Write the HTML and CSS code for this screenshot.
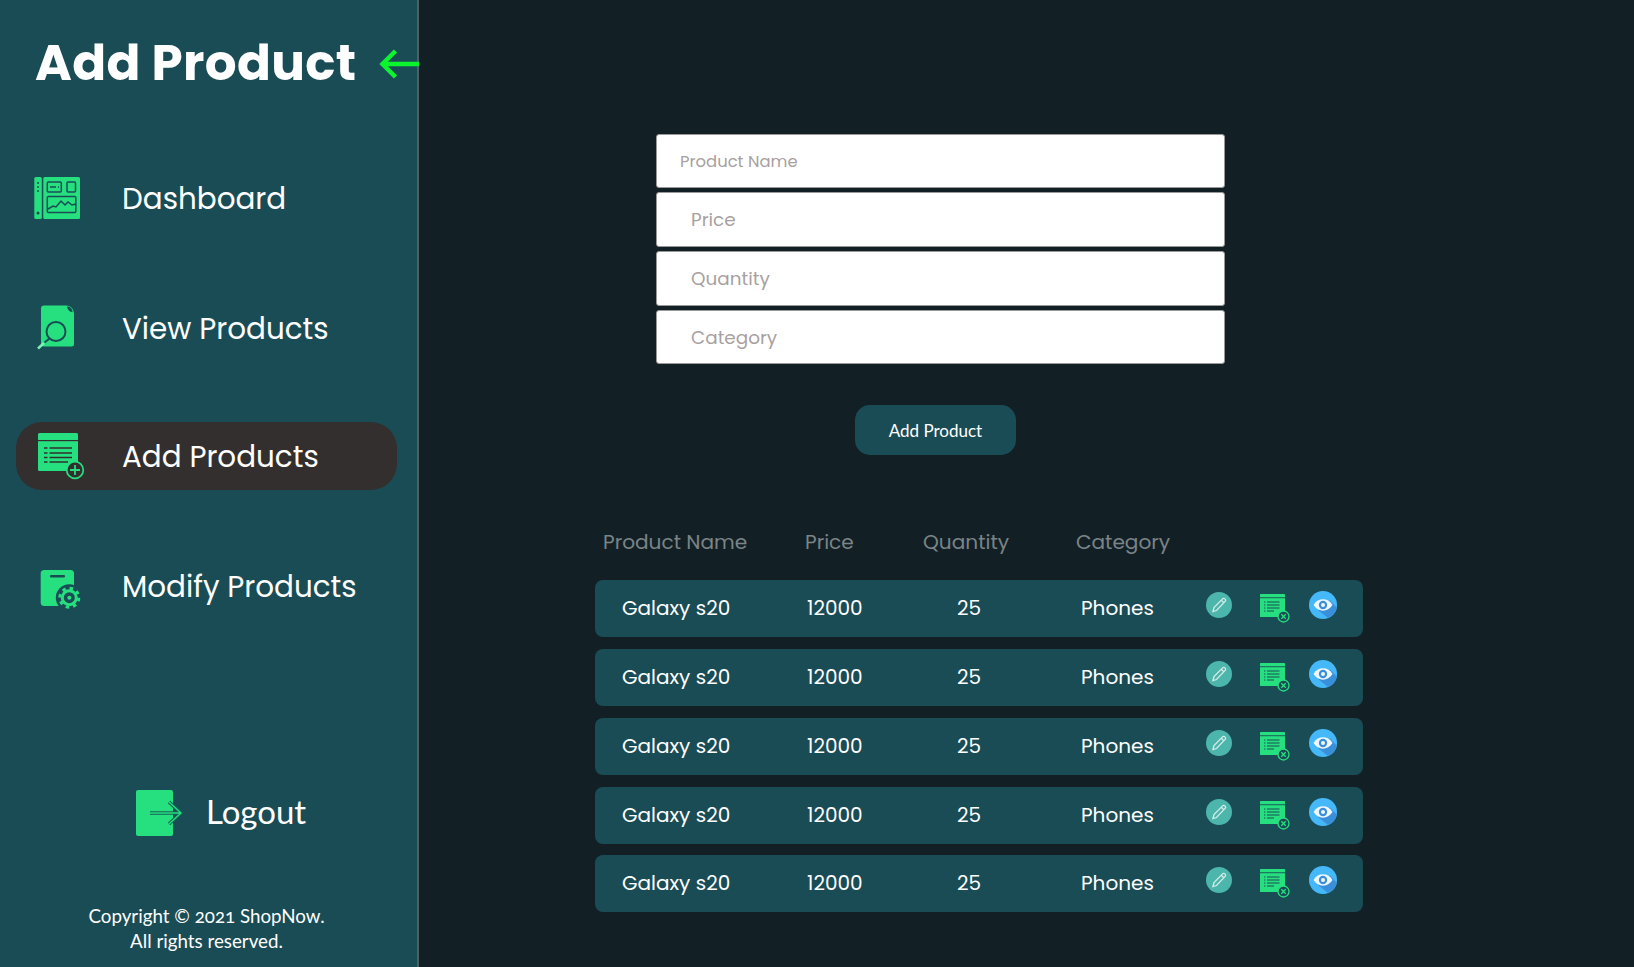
FILE: index.html
```html
<!DOCTYPE html>
<html lang="en">
<head>
  <meta charset="UTF-8">
  <meta name="viewport" content="width=device-width, initial-scale=1.0">
  <title>Add Product - ShopNow</title>
  <link rel="stylesheet" href="styles.css">
</head>
<body>

<!-- shared icons -->
<svg class="sprites" width="0" height="0">
  <symbol id="icon-sheet" viewBox="0 0 26 26">
    <rect x="0" y="1" width="25" height="23" rx="0.6" fill="#26e07f"/>
    <rect x="0" y="4.3" width="25" height="0.9" fill="#1a4c56"/>
    <path d="M4 9h1.400M7 9h12.500M4 12h1.400M7 12h12.500M4 15h1.400M7 15h12.500M4 18h1.400M7 18h7" stroke="#1a4c56" stroke-width="1"/>
  </symbol>
  <symbol id="icon-edit" viewBox="0 0 26 26">
    <circle cx="13" cy="13" r="13" fill="#4db6ac"/>
    <path d="M7 19.500l1-4 8.600-8.600a1.600 1.600 0 0 1 2.300 0l.2.2a1.600 1.600 0 0 1 0 2.300L10.500 18.500z" fill="none" stroke="#d5ece9" stroke-width="1.300"/>
    <path d="M15.300 8.200l2.500 2.500" stroke="#d5ece9" stroke-width="1.300"/>
  </symbol>
  <symbol id="icon-remove" viewBox="0 0 30 30">
    <use href="#icon-sheet" width="26" height="26"/>
    <circle cx="23.500" cy="23.500" r="5.500" fill="#1a4c56" stroke="#26e07f" stroke-width="1.300"/>
    <path d="M21.300 21.300l4.400 4.400M25.700 21.300l-4.400 4.400" stroke="#26e07f" stroke-width="1.300"/>
  </symbol>
  <symbol id="icon-view" viewBox="0 0 28 28">
    <circle cx="14" cy="14" r="14" fill="#45b8fa"/>
    <path d="M21 9.500L28 17A14 14 0 0 1 19 27L9 19z" fill="#3a8fd9"/>
    <path d="M4.500 14C7 10 10.500 8.300 14 8.300S21 10 23.500 14C21 18 17.500 19.700 14 19.700S7 18 4.500 14z" fill="#eef8fe"/>
    <circle cx="14" cy="14" r="4.200" fill="#3a8fd9"/>
    <circle cx="14" cy="14" r="2" fill="#eef8fe"/>
  </symbol>
</svg>

<div class="layout">
  <aside class="sidebar">
    <header class="brand">
      <h1>Add Product</h1>
      <svg class="back-arrow" width="40" height="30" viewBox="0 0 40 30">
        <path d="M16.500 2L3.500 15l13 13M3.500 15H40" fill="none" stroke="#0bf52f" stroke-width="4.500"/>
      </svg>
    </header>

    <nav class="menu">
      <a class="menu-item" href="#">
        <svg class="menu-icon" width="52" height="48" viewBox="0 0 52 48">
          <rect x="0.300" y="3" width="7.500" height="42" rx="1.500" fill="#26e07f"/>
          <rect x="9.300" y="3" width="36.700" height="42" rx="1.500" fill="#26e07f"/>
          <path d="M3 9h2M3 13h2M3 17h2" stroke="#1a4c56" stroke-width="1.500"/>
          <circle cx="4" cy="39" r="1.500" fill="#1a4c56"/>
          <g fill="none" stroke="#1a4c56" stroke-width="1.500">
            <rect x="13.300" y="8" width="14" height="10" rx="1"/>
            <rect x="33" y="8" width="8.500" height="10" rx="1"/>
            <rect x="13.300" y="22.500" width="28.500" height="16" rx="1"/>
            <path d="M14 35l5-3 3 1 5-6 4 4 3-3 4 3 4-1"/>
            <path d="M16 13h6M24 13h1"/>
          </g>
        </svg>
        <span>Dashboard</span>
      </a>
      <a class="menu-item" href="#">
        <svg class="menu-icon" width="52" height="48" viewBox="0 0 52 48">
          <path d="M10 1.500h22a8 8 0 0 1 8 8V40a2.500 2.500 0 0 1-2.500 2.500h-27.500A3 3 0 0 1 7 39.500V4.500a3 3 0 0 1 3-3z" fill="#26e07f"/>
          <path d="M33 2.500c3 0 5.500 2 5.500 5.500-3 0-5-2-5.500-5.500z" fill="#1a4c56"/>
          <circle cx="22" cy="27.500" r="9.500" fill="#26e07f" stroke="#1a4c56" stroke-width="2"/>
          <path d="M15.500 34.500l-5 4" stroke="#1a4c56" stroke-width="2"/>
          <path d="M10 39l-6 5.500" stroke="#7df0b4" stroke-width="2.500"/>
        </svg>
        <span>View Products</span>
      </a>
      <a class="menu-item active" href="#">
        <svg class="menu-icon" width="52" height="48" viewBox="0 0 52 48">
          <rect x="4" y="1" width="40" height="38" rx="1.500" fill="#26e07f"/>
          <rect x="4" y="8" width="40" height="1.200" fill="#332f2f"/>
          <path d="M10 16h3.500M15.500 16H38M10 21h3.500M15.500 21H38M10 25.500h3.500M15.500 25.500H38M10 30h3.500M15.500 30H34" stroke="#332f2f" stroke-width="1.700"/>
          <circle cx="41" cy="38" r="8.300" fill="#332f2f" stroke="#26e07f" stroke-width="1.700"/>
          <path d="M41 33v10M36 38h10" stroke="#26e07f" stroke-width="1.800"/>
        </svg>
        <span>Add Products</span>
      </a>
      <a class="menu-item" href="#">
        <svg class="menu-icon" width="52" height="48" viewBox="0 0 52 48">
          <rect x="6.700" y="8" width="33.300" height="36" rx="3.500" fill="#26e07f"/>
          <rect x="16" y="13" width="15" height="2.500" rx="1" fill="#1a4c56"/>
          <circle cx="35.300" cy="35.700" r="13.500" fill="#1a4c56"/>
          <circle cx="35.300" cy="35.700" r="7" fill="none" stroke="#26e07f" stroke-width="3"/>
          <circle cx="35.300" cy="35.700" r="9.500" fill="none" stroke="#26e07f" stroke-width="3" stroke-dasharray="3.500 3.960"/>
          <circle cx="35.300" cy="35.700" r="2" fill="#26e07f"/>
        </svg>
        <span>Modify Products</span>
      </a>
    </nav>

    <div class="logout">
      <svg width="47" height="46" viewBox="0 0 47 46">
        <rect x="0" y="0" width="37" height="46" rx="2" fill="#26e07f"/>
        <path d="M14 23H45M33 12l12 11-12 11" fill="none" stroke="#166355" stroke-width="3.500"/>
        <path d="M14 23H45M33 12l12 11-12 11" fill="none" stroke="#26e07f" stroke-width="1.300"/>
      </svg>
      <span>Logout</span>
    </div>

    <p class="copyright">Copyright © 2021 ShopNow.<br>All rights reserved.</p>
  </aside>

  <main class="content">
    <form class="product-form">
      <input class="field first" type="text" placeholder="Product Name">
      <input class="field" type="text" placeholder="Price">
      <input class="field" type="text" placeholder="Quantity">
      <input class="field" type="text" placeholder="Category">
      <button class="add-btn" type="button">Add Product</button>
    </form>

    <section class="products">
      <div class="table-head">
        <span class="col-name">Product Name</span>
        <span class="col-price">Price</span>
        <span class="col-qty">Quantity</span>
        <span class="col-cat">Category</span>
      </div>
      <div id="rows"></div>
    </section>
  </main>
</div>

<script>
  // Product rows
  const products = [
    { name: "Galaxy s20", price: 12000, qty: 25, category: "Phones" },
    { name: "Galaxy s20", price: 12000, qty: 25, category: "Phones" },
    { name: "Galaxy s20", price: 12000, qty: 25, category: "Phones" },
    { name: "Galaxy s20", price: 12000, qty: 25, category: "Phones" },
    { name: "Galaxy s20", price: 12000, qty: 25, category: "Phones" }
  ];

  const rows = document.getElementById('rows');
  products.forEach(p => {
    const row = document.createElement('div');
    row.className = 'row';
    row.innerHTML = `
      <span class="cell-name">${p.name}</span>
      <span class="cell-price">${p.price}</span>
      <span class="cell-qty">${p.qty}</span>
      <span class="cell-cat">${p.category}</span>
      <span class="actions">
        <svg class="act-edit" width="26" height="26"><use href="#icon-edit"/></svg>
        <svg class="act-remove" width="30" height="30"><use href="#icon-remove"/></svg>
        <svg class="act-view" width="28" height="28"><use href="#icon-view"/></svg>
      </span>`;
    rows.appendChild(row);
  });
</script>

</body>
</html>
```

FILE: styles.css
```css
* {
  box-sizing: border-box;
}

body {
  margin: 0;
  background: #122026;
  font-family: 'Poppins', 'Inter', 'Open Sans', sans-serif;
  color: white;
  overflow: hidden;
}

.sprites {
  position: absolute;
}

.layout {
  display: flex;
  height: 967px;
}

/* Sidebar */
.sidebar {
  width: 419px;
  flex-shrink: 0;
  background: #1a4c56;
  border-right: 2px solid #4f5f63;
  display: flex;
  flex-direction: column;
}

.brand {
  display: flex;
  align-items: center;
  height: 126px;
  padding-left: 35px;
  gap: 23px;
}

.brand h1 {
  margin: 0;
  font-size: 50px;
  font-weight: 700;
  letter-spacing: 0.3px;
  white-space: nowrap;
}

.back-arrow {
  flex-shrink: 0;
  margin-top: 1px;
}

.menu {
  display: flex;
  flex-direction: column;
  padding: 0 20px 0 16px;
  margin-top: 38px;
}

.menu-item {
  display: flex;
  align-items: center;
  height: 68px;
  color: white;
  text-decoration: none;
  font-size: 29.4px;
  padding-left: 18px;
  border-radius: 26px;
  margin-bottom: 62px;
}

.menu-item span {
  margin: 2px 0 0 36px;
}

.menu-icon {
  flex-shrink: 0;
  overflow: visible;
}

.menu-item.active {
  background: #332f2f;
  margin-top: -2.5px;
}

.logout {
  display: flex;
  align-items: center;
  padding-left: 136px;
  gap: 23px;
  font-family: 'Lato', sans-serif;
  font-size: 33px;
  margin-top: 108px;
}

.logout span {
  margin-bottom: 4px;
}

.copyright {
  margin: 67px 0 0;
  padding-right: 4px;
  text-align: center;
  font-family: 'Lato', sans-serif;
  font-variant-numeric: oldstyle-nums;
  font-size: 18.75px;
  line-height: 25px;
}

/* Form */
.content {
  flex: 1;
  padding-top: 133.5px;
}

.product-form {
  display: flex;
  flex-direction: column;
  width: 569px;
  margin-left: 237px;
}

.field {
  height: 54.5px;
  margin-bottom: 4.3px;
  padding: 0 0 0 34px;
  background: white;
  border: 1px solid #999;
  border-radius: 3px;
  font-family: inherit;
  font-size: 18.4px;
}

.field.first {
  padding: 2px 0 0 23px;
  font-size: 16.4px;
}

.field::placeholder {
  color: #a89f9f;
}

.add-btn {
  align-self: flex-start;
  width: 161px;
  height: 50px;
  margin: 36px 0 0 199px;
  padding-top: 3px;
  background: #1a4c56;
  border: none;
  border-radius: 15px;
  color: white;
  font-family: 'Lato', sans-serif;
  font-size: 17px;
}

/* Table */
.products {
  width: 768px;
  margin: 72px 0 0 176px;
}

.table-head {
  position: relative;
  height: 30px;
  margin-bottom: 23.5px;
  font-size: 20.1px;
  color: #7b8487;
}

.table-head span,
.row > span {
  position: absolute;
  white-space: nowrap;
}

.col-name { left: 8px; }
.col-price { left: 210px; }
.col-qty { left: 328px; }
.col-cat { left: 481px; }

.row {
  position: relative;
  height: 57px;
  margin-bottom: 11.8px;
  background: #1a4c56;
  border-radius: 8px;
  font-size: 20px;
  line-height: 57px;
}

.cell-name { left: 27px; }
.cell-price { left: 212px; }
.cell-qty { left: 362px; }
.cell-cat { left: 486px; }

.actions {
  left: 611px;
  top: 12px;
  display: flex;
  line-height: 0;
}

.act-remove { margin: 1px 0 0 28px; }
.act-view { margin: -1px 0 0 19px; }
```
